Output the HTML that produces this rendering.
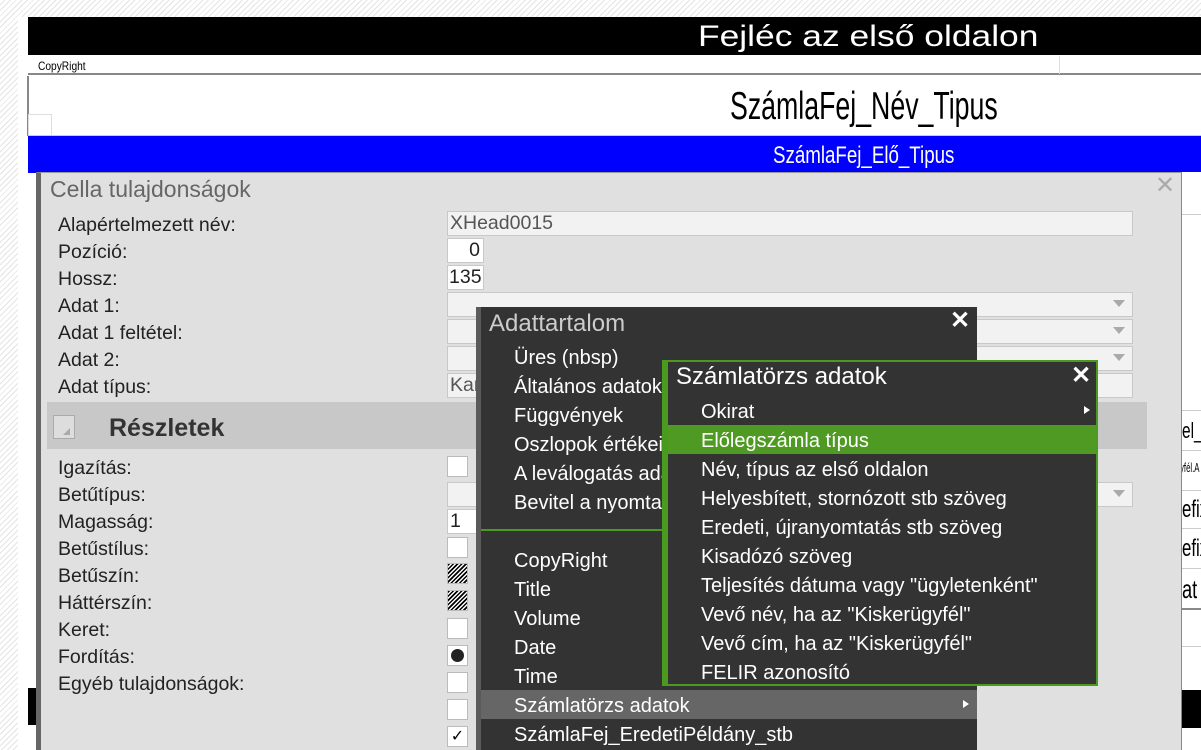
<!DOCTYPE html>
<html><head><meta charset="utf-8"><style>
*{margin:0;padding:0;box-sizing:border-box}
body{width:1201px;height:750px;overflow:hidden;position:relative;font-family:"Liberation Sans",Arial,sans-serif;
background:repeating-linear-gradient(135deg,#fff 0 3px,#e4e4e4 3px 4px)}
.a{position:absolute}
.n{transform-origin:0 0;white-space:nowrap}
.lab{position:absolute;left:58px;font-size:19.5px;color:#222;line-height:20px;white-space:nowrap}
.inp{position:absolute;left:447px;background:#f2f2f2;border:1px solid #c8c8c8;font-size:19.5px;color:#555;line-height:22px;padding-left:2px;overflow:hidden;white-space:nowrap}
.cb{position:absolute;left:447px;width:21px;height:21px;background:#fff;border:1px solid #bbb}
.mi{position:absolute;font-size:20px;color:#fff;line-height:22px;white-space:nowrap}
.hatch{background:repeating-linear-gradient(135deg,#000 0 1.5px,#fff 1.5px 3px)}
</style></head><body>
<div class="a" style="left:18px;top:17px;width:1183px;height:733px;background:#fff"></div>
<div class="a" style="left:28px;top:17px;width:1173px;height:38px;background:#000"></div>
<div class="a n" style="left:698px;top:18px;font-size:30px;color:#fff;line-height:38px;transform:scaleX(1.18)">Fejléc az első oldalon</div>
<div class="a" style="left:28px;top:55px;width:1173px;height:20px;border-bottom:2px solid #888"></div>
<div class="a" style="left:1059px;top:56px;width:1px;height:18px;background:#ddd"></div>
<div class="a n" style="left:38px;top:59px;font-size:12px;color:#000;transform:scaleX(0.85)">CopyRight</div>
<div class="a" style="left:27px;top:76px;width:2px;height:60px;background:#888"></div>
<div class="a" style="left:28px;top:114px;width:24px;height:22px;border:1px solid #ddd"></div>
<div class="a n" style="left:730px;top:85px;font-size:39px;color:#000;line-height:44px;transform:scaleX(0.685)">SzámlaFej_Név_Tipus</div>
<div class="a" style="left:28px;top:135px;width:1173px;height:38px;background:#0000ff;border-top:1px solid #ccc"></div>
<div class="a n" style="left:773px;top:142px;font-size:24px;color:#fff;line-height:28px;transform:scaleX(0.78)">SzámlaFej_Elő_Tipus</div>

<div class="a" style="left:1181px;top:172px;width:20px;height:578px;background:#fff"></div>
<div class="a" style="left:1181px;top:214px;width:20px;border-top:1px solid #ccc"></div>
<div class="a" style="left:1181px;top:410px;width:20px;border-top:1px solid #ccc"></div>
<div class="a" style="left:1181px;top:450px;width:20px;border-top:1px solid #ccc"></div>
<div class="a" style="left:1181px;top:490px;width:20px;border-top:1px solid #ccc"></div>
<div class="a" style="left:1181px;top:528px;width:20px;border-top:1px solid #ccc"></div>
<div class="a" style="left:1181px;top:568px;width:20px;border-top:1px solid #ccc"></div>
<div class="a" style="left:1181px;top:608px;width:20px;border-top:2px solid #888"></div>
<div class="a" style="left:1181px;top:646px;width:20px;border-top:1px solid #ccc"></div>
<div class="a" style="left:1181px;top:690px;width:20px;height:38px;background:#000"></div>
<div class="a n" style="left:1182px;top:418px;font-size:22px;transform:scaleX(0.7)">el_H</div>
<div class="a n" style="left:1180px;top:460px;font-size:13px;transform:scaleX(0.6)">yfél.A</div>
<div class="a n" style="left:1182px;top:496px;font-size:24px;transform:scaleX(0.7)">efix</div>
<div class="a n" style="left:1182px;top:535px;font-size:24px;transform:scaleX(0.7)">efix</div>
<div class="a n" style="left:1182px;top:574px;font-size:26px;transform:scaleX(0.7)">at</div>
<div class="a" style="left:28px;top:688px;width:8px;height:37px;background:#000"></div>

<div class="a" style="left:36px;top:172px;width:1146px;height:578px;background:#e0e0e0;border-left:5px solid #666;border-right:1px solid #888;border-top:1px solid #999"></div>
<div class="a" style="left:50px;top:176px;font-size:23px;color:#666;line-height:26px">Cella tulajdonságok</div>
<div class="a" style="left:1155px;top:172px;font-size:24px;color:#aaa;line-height:28px">✕</div>

<div class="lab" style="top:215px">Alapértelmezett név:</div>
<div class="lab" style="top:242px">Pozíció:</div>
<div class="lab" style="top:269px">Hossz:</div>
<div class="lab" style="top:296px">Adat 1:</div>
<div class="lab" style="top:323px">Adat 1 feltétel:</div>
<div class="lab" style="top:350px">Adat 2:</div>
<div class="lab" style="top:377px">Adat típus:</div>
<div class="inp" style="top:211px;width:686px;height:25px">XHead0015</div>
<div class="inp" style="top:238px;width:37px;height:25px;background:#fff;color:#222;text-align:right;padding-right:3px">0</div>
<div class="inp" style="top:265px;width:37px;height:25px;background:#fff;color:#222;padding-left:1px">135</div>
<div class="inp" style="top:292px;width:686px;height:25px"></div>
<div class="inp" style="top:319px;width:686px;height:25px"></div>
<div class="inp" style="top:346px;width:686px;height:25px"></div>
<div class="inp" style="top:373px;width:686px;height:25px">Kar</div>
<div class="a" style="left:1113px;top:300px;border:6px solid transparent;border-top:7px solid #aaa"></div>
<div class="a" style="left:1113px;top:327px;border:6px solid transparent;border-top:7px solid #aaa"></div>
<div class="a" style="left:1113px;top:354px;border:6px solid transparent;border-top:7px solid #aaa"></div>

<div class="a" style="left:47px;top:402px;width:1100px;height:47px;background:#c8c8c8"></div>
<div class="a" style="left:53px;top:415px;width:22px;height:24px;border:1px solid #aaa;background:#ddd"></div>
<div class="a" style="left:63px;top:428px;border-left:7px solid transparent;border-bottom:7px solid #aaa"></div>
<div class="a" style="left:109px;top:413px;font-size:25px;font-weight:bold;color:#333;line-height:30px">Részletek</div>

<div class="lab" style="top:458px">Igazítás:</div>
<div class="lab" style="top:485px">Betűtípus:</div>
<div class="lab" style="top:512px">Magasság:</div>
<div class="lab" style="top:539px">Betűstílus:</div>
<div class="lab" style="top:566px">Betűszín:</div>
<div class="lab" style="top:593px">Háttérszín:</div>
<div class="lab" style="top:620px">Keret:</div>
<div class="lab" style="top:647px">Fordítás:</div>
<div class="lab" style="top:674px">Egyéb tulajdonságok:</div>
<div class="cb" style="top:456px"></div>
<div class="inp" style="top:482px;width:686px;height:25px"></div>
<div class="a" style="left:1113px;top:490px;border:6px solid transparent;border-top:7px solid #aaa"></div>
<div class="inp" style="top:509px;width:40px;height:25px;background:#fff;color:#222">1</div>
<div class="cb" style="top:537px"></div>
<div class="cb hatch" style="top:563px"></div>
<div class="cb hatch" style="top:590px"></div>
<div class="cb" style="top:618px"></div>
<div class="cb" style="top:645px"><div class="a" style="left:3px;top:3px;width:13px;height:13px;border-radius:50%;background:#222"></div></div>
<div class="cb" style="top:672px"></div>
<div class="cb" style="top:699px"></div>
<div class="cb" style="top:726px;font-size:16px;line-height:19px;text-align:center">✓</div>

<div class="a" style="left:476px;top:307px;width:501px;height:443px;background:#333;border-left:5px solid #5a5a5a"></div>
<div class="a" style="left:489px;top:311px;font-size:24px;color:#ccc;line-height:26px">Adattartalom</div>
<div class="a" style="left:950px;top:307px;font-size:24px;color:#fff;line-height:28px;font-weight:bold">✕</div>
<div class="mi" style="left:514px;top:347px">Üres (nbsp)</div>
<div class="mi" style="left:514px;top:376px">Általános adatok</div>
<div class="mi" style="left:514px;top:405px">Függvények</div>
<div class="mi" style="left:514px;top:434px">Oszlopok értékei</div>
<div class="mi" style="left:514px;top:463px">A leválogatás adatai</div>
<div class="mi" style="left:514px;top:492px">Bevitel a nyomtatáskor</div>
<div class="a" style="left:481px;top:529px;width:200px;height:2px;background:#4a9a20"></div>
<div class="mi" style="left:514px;top:550px">CopyRight</div>
<div class="mi" style="left:514px;top:579px">Title</div>
<div class="mi" style="left:514px;top:608px">Volume</div>
<div class="mi" style="left:514px;top:637px">Date</div>
<div class="mi" style="left:514px;top:666px">Time</div>
<div class="a" style="left:481px;top:690px;width:496px;height:29px;background:#666"></div>
<div class="mi" style="left:514px;top:695px">Számlatörzs adatok</div>
<div class="a" style="left:963px;top:700px;border:4px solid transparent;border-left:6px solid #fff"></div>
<div class="mi" style="left:514px;top:724px">SzámlaFej_EredetiPéldány_stb</div>

<div class="a" style="left:662px;top:360px;width:436px;height:326px;background:#333;border:2px solid #4a9a20;border-left:6px solid #4a9a20"></div>
<div class="a" style="left:676px;top:364px;font-size:24px;color:#fff;line-height:26px">Számlatörzs adatok</div>
<div class="a" style="left:1071px;top:362px;font-size:24px;color:#fff;line-height:28px;font-weight:bold">✕</div>
<div class="mi" style="left:701px;top:401px">Okirat</div>
<div class="a" style="left:1084px;top:406px;border:4px solid transparent;border-left:6px solid #fff"></div>
<div class="a" style="left:668px;top:425px;width:429px;height:29px;background:#4e9a22"></div>
<div class="mi" style="left:701px;top:430px">Előlegszámla típus</div>
<div class="mi" style="left:701px;top:459px">Név, típus az első oldalon</div>
<div class="mi" style="left:701px;top:488px">Helyesbített, stornózott stb szöveg</div>
<div class="mi" style="left:701px;top:517px">Eredeti, újranyomtatás stb szöveg</div>
<div class="mi" style="left:701px;top:546px">Kisadózó szöveg</div>
<div class="mi" style="left:701px;top:575px">Teljesítés dátuma vagy "ügyletenként"</div>
<div class="mi" style="left:701px;top:604px">Vevő név, ha az "Kiskerügyfél"</div>
<div class="mi" style="left:701px;top:633px">Vevő cím, ha az "Kiskerügyfél"</div>
<div class="mi" style="left:701px;top:662px">FELIR azonosító</div>
</body></html>
